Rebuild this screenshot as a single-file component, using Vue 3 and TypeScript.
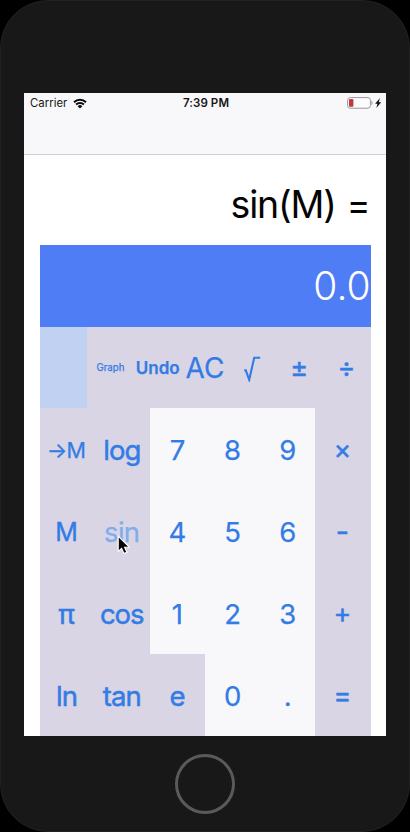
<script setup lang="ts">
interface Key {
  label: string
  kind?: string
  light?: boolean
}

const topRow: Key[] = [
  { label: '', kind: 'blank' },
  { label: 'Graph', kind: 'graph' },
  { label: 'Undo', kind: 'undo' },
  { label: 'AC', kind: 'ac' },
  { label: '√', kind: 'root' },
  { label: '±', kind: 'sym' },
  { label: '÷', kind: 'sym' },
]

const rows: Key[][] = [
  [
    { label: '→M', kind: 'store' },
    { label: 'log', kind: 'word' },
    { label: '7', light: true },
    { label: '8', light: true },
    { label: '9', light: true },
    { label: '×', kind: 'sym' },
  ],
  [
    { label: 'M', kind: 'mem' },
    { label: 'sin', kind: 'pressed' },
    { label: '4', light: true },
    { label: '5', light: true },
    { label: '6', light: true },
    { label: '-', kind: 'sym minus' },
  ],
  [
    { label: 'π', kind: 'pi' },
    { label: 'cos', kind: 'word' },
    { label: '1', light: true },
    { label: '2', light: true },
    { label: '3', light: true },
    { label: '+', kind: 'sym' },
  ],
  [
    { label: 'ln', kind: 'word' },
    { label: 'tan', kind: 'word' },
    { label: 'e', kind: 'word' },
    { label: '0', light: true },
    { label: '.', light: true },
    { label: '=', kind: 'sym' },
  ],
]
</script>

<template>
  <div class="phone">
    <main class="screen">
      <header class="nav">
        <div class="status">
          <div class="carrier">
            <span>Carrier</span>
            <svg class="wifi" viewBox="0 0 14 11">
              <path d="M1 4.2a8.6 8.6 0 0 1 12 0M3.1 6.5a5.5 5.5 0 0 1 7.8 0" />
              <path class="solid" d="M7 10.6 4.7 8.3a3.2 3.2 0 0 1 4.6 0Z" />
            </svg>
          </div>
          <span class="time">7:39 PM</span>
          <svg class="battery" viewBox="0 0 35 12">
            <rect class="case" x="0.6" y="0.6" width="22.8" height="10.6" rx="2.6" />
            <rect class="level" x="2" y="2" width="4.4" height="7.8" rx="1" />
            <path class="cap" d="M24.4 3.8v4.4c1.5-.5 1.5-3.9 0-4.4Z" />
            <path class="bolt" d="m33 1-4.9 5.7h2.4l-1.2 4.3 4.9-5.7h-2.5Z" />
          </svg>
        </div>
      </header>
      <div class="calc">
        <div class="formula"><span class="expr">sin(M)</span> <span class="equals">=</span></div>
        <div class="result">0.0</div>
        <div class="row top">
          <button v-for="(k, i) in topRow" :key="i" class="key" :class="k.kind">
            <svg v-if="k.kind === 'root'" class="radical" viewBox="0 0 18 26" aria-label="√">
              <path d="M1.2 14.4h1.6l3.4 9.4 5-22h6" />
            </svg>
            <span v-else>{{ k.label }}</span>
          </button>
        </div>
        <div v-for="(r, n) in rows" :key="n" class="row">
          <button v-for="k in r" :key="k.label" class="key" :class="[k.kind, { light: k.light }]">
            <span>{{ k.label }}</span>
          </button>
        </div>
      </div>
    </main>
    <footer class="chin"><span class="home"></span></footer>
    <svg class="cursor" viewBox="0 0 13 20">
      <path d="M1.2 1.2v15.2l3.4-3.1 2.4 5.3 2.9-1.3-2.3-5.1h4.6Z" />
    </svg>
  </div>
</template>

<style>
body {
  background: #000;
}
</style>

<style scoped>
.phone {
  position: relative;
  box-sizing: border-box;
  width: 410px;
  height: 832px;
  padding: 92px 23px 0;
  overflow: hidden;
  border: 1px solid #222122;
  border-radius: 48px;
  background: #191819;
  font-family: Inter, 'Liberation Sans', sans-serif;
}
.screen {
  height: 643px;
  overflow: hidden;
  background: #fff;
}
.nav {
  box-sizing: border-box;
  height: 62px;
  border-bottom: 1px solid #cfced1;
  background: #f8f8fa;
}
.status {
  display: grid;
  grid-template-columns: 1fr auto 1fr;
  align-items: center;
  height: 20px;
  padding: 0 4px 0 6px;
  color: #151517;
}
.carrier {
  display: flex;
  align-items: center;
  gap: 5.5px;
  font-size: 11.3px;
  letter-spacing: 0.05px;
}
.wifi {
  width: 14px;
  height: 11px;
  fill: none;
  stroke: #080808;
  stroke-width: 2;
}
.wifi .solid {
  fill: #080808;
  stroke: none;
}
.time {
  font-size: 11.5px;
  font-weight: 600;
  letter-spacing: 0.1px;
}
.battery {
  justify-self: end;
  width: 35px;
  height: 12px;
}
.case {
  fill: #fcfbfd;
  stroke: #9c969e;
}
.level {
  fill: #c4383d;
}
.cap {
  fill: #9c969e;
}
.bolt {
  fill: #111;
}
.calc {
  width: 331px;
  margin-left: 15.5px;
  padding-top: 7.5px;
}
.formula,
.result {
  display: flex;
  align-items: center;
  justify-content: flex-end;
  box-sizing: border-box;
  height: 82px;
  white-space: pre;
}
.formula {
  gap: 11px;
  padding-top: 2px;
  color: #050505;
  font-size: 37.5px;
}
.expr {
  letter-spacing: -1.2px;
}
.equals {
  font-size: 36px;
}
.result {
  background: #4e7df5;
  color: #fff;
  font-size: 39px;
  font-weight: 300;
}
.row {
  display: grid;
  grid-template-columns: repeat(6, 1fr);
  height: 81.9px;
  background: #d9d5e4;
}
.row.top {
  grid-template-columns: repeat(7, 1fr);
}
.key {
  display: flex;
  align-items: center;
  justify-content: center;
  box-sizing: border-box;
  min-width: 0;
  margin: 0;
  padding: 1px 0 0;
  border: 0;
  background: transparent;
  color: #337ce4;
  font: 400 27.5px Inter, 'Liberation Sans', sans-serif;
  -webkit-text-stroke: 0.25px currentColor;
  white-space: nowrap;
}
.light {
  background: #f8f8fa;
}
.blank {
  background: #c1d1f2;
}
.graph {
  font-size: 9.7px;
}
.undo {
  font-size: 17px;
  font-weight: 600;
}
.ac {
  font-size: 28px;
}
.radical {
  width: 18px;
  height: 26px;
  margin-top: 3px;
  fill: none;
  stroke: currentColor;
  stroke-width: 2.1;
}
.store {
  padding-right: 2px;
  font-size: 21.5px;
  letter-spacing: -0.6px;
}
.word {
  padding-right: 1px;
  letter-spacing: -1px;
  -webkit-text-stroke-width: 0.5px;
}
.mem {
  padding-right: 1px;
  font-size: 25px;
  -webkit-text-stroke-width: 0.4px;
}
.pi {
  padding-right: 1px;
  -webkit-text-stroke-width: 0.5px;
}
.sym {
  padding: 0 1px 0 0;
  font-size: 27px;
  -webkit-text-stroke-width: 0.45px;
}
.minus {
  font-size: 29px;
}
.pressed {
  padding-right: 1px;
  color: #82adeb;
  letter-spacing: -0.7px;
}
.cursor {
  position: absolute;
  left: 116px;
  top: 534px;
  width: 13px;
  height: 20px;
  fill: #050505;
  stroke: #fff;
  stroke-width: 1.1;
}
.chin {
  display: flex;
  justify-content: center;
  padding: 18px 1px 0 0;
}
.home {
  box-sizing: border-box;
  width: 60px;
  height: 60px;
  border: 3px solid #5b595c;
  border-radius: 50%;
}
</style>
